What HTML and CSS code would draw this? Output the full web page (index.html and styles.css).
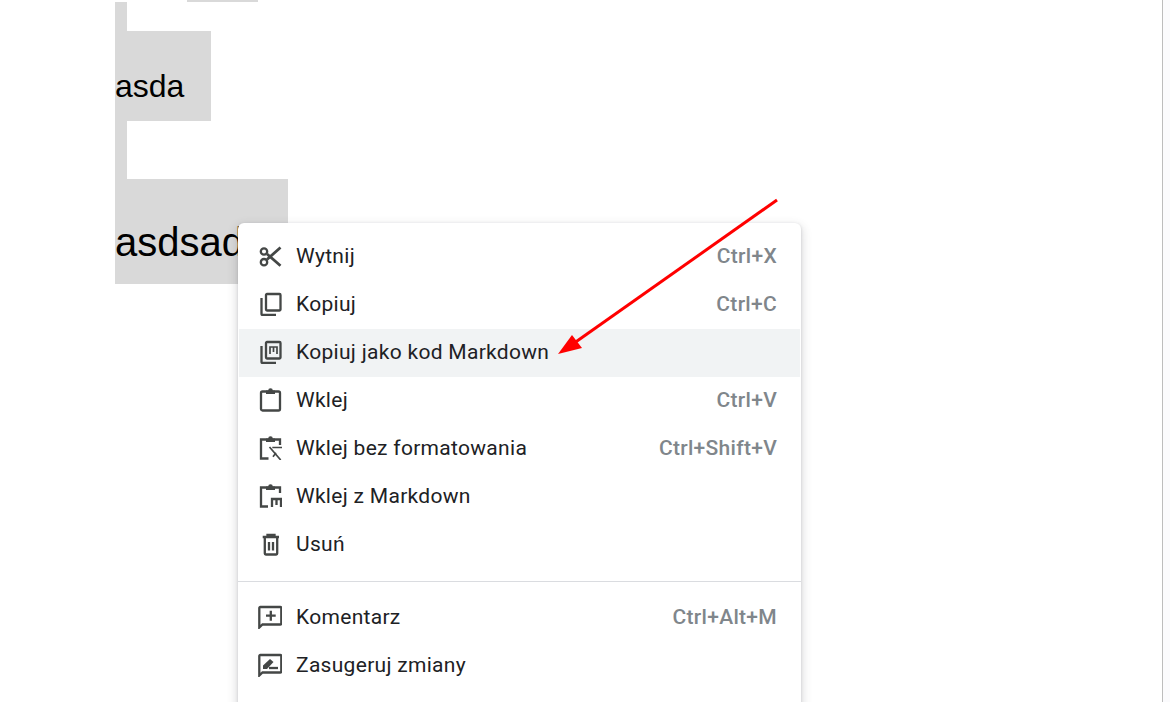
FILE: index.html
```html
<!DOCTYPE html>
<html lang="pl">
<head>
<meta charset="utf-8">
<title>Menu kontekstowe</title>
<link rel="stylesheet" href="styles.css">
</head>
<body>
<div class="page">
  <main class="doc">
    <div class="sliver"></div>
    <div class="stub stub-top"></div>
    <div class="block block-small">asda</div>
    <div class="stub stub-mid"></div>
    <div class="block block-large">asdsad</div>
  </main>
  <aside class="gutter"></aside>
</div>

<div class="menu">
  <div class="item">
    <svg class="icon" viewBox="0 0 24 24"><circle cx="6" cy="7.500" r="3.200"/><circle cx="6" cy="18.200" r="3.200"/><path class="bold" d="M9 10 22.500 21.800M9 15.500 22.500 3.500"/></svg>
    <span class="label">Wytnij</span><span class="key">Ctrl+X</span>
  </div>
  <div class="item">
    <svg class="icon" viewBox="0 0 24 24"><rect x="8" y="2" width="14.500" height="16.500" rx="1"/><path d="M3.500 6v16a1 1 0 0 0 1 1H18"/></svg>
    <span class="label">Kopiuj</span><span class="key">Ctrl+C</span>
  </div>
  <div class="item item-active">
    <svg class="icon" viewBox="0 0 24 24"><rect x="8" y="2" width="14.500" height="16.500" rx="1"/><path d="M3.500 6v16a1 1 0 0 0 1 1H18"/><path class="thin" d="M12 14V7h7v7M15.500 7v5"/></svg>
    <span class="label">Kopiuj jako kod Markdown</span>
  </div>
  <div class="item">
    <svg class="icon" viewBox="0 0 24 24"><rect x="3" y="3.500" width="19" height="19" rx="1.500"/><path class="solid" d="M8 2.500h2.200a2.300 2.300 0 0 1 4.600 0H17V6H8z"/></svg>
    <span class="label">Wklej</span><span class="key">Ctrl+V</span>
  </div>
  <div class="item">
    <svg class="icon" viewBox="0 0 24 24"><path d="M10.500 22.500H3V3.500h19V9"/><path class="solid" d="M8 2.500h2.200a2.300 2.300 0 0 1 4.600 0H17V6H8z"/><path class="thin" d="M14.300 11.500h10.400M11.500 11 22.700 24M15 20.700l3-4"/></svg>
    <span class="label">Wklej bez formatowania</span><span class="key">Ctrl+Shift+V</span>
  </div>
  <div class="item">
    <svg class="icon" viewBox="0 0 24 24"><path d="M10 22.500H3V3.500h19V9"/><path class="solid" d="M8 2.500h2.200a2.300 2.300 0 0 1 4.600 0H17V6H8z"/><path d="M14 23v-8h9v8M18.500 15v6"/></svg>
    <span class="label">Wklej z Markdown</span>
  </div>
  <div class="item">
    <svg class="icon" viewBox="0 0 24 24"><path d="M4.700 5h16.300M6.800 5v16.500a1 1 0 0 0 1 1h10.400a1 1 0 0 0 1-1V5M9.500 4.500V3h7v1.500"/><path d="M11 10v8.500M15 10v8.500"/></svg>
    <span class="label">Usuń</span>
  </div>
  <div class="divider"></div>
  <div class="item">
    <svg class="icon" viewBox="0 0 24 24"><path d="M1.300 22.500V3a1 1 0 0 1 1-1h20a1 1 0 0 1 1 1v15.500a1 1 0 0 1-1 1H4.500z"/><path d="M12.800 5.700v10M8 10.700h9.700"/></svg>
    <span class="label">Komentarz</span><span class="key">Ctrl+Alt+M</span>
  </div>
  <div class="item">
    <svg class="icon" viewBox="0 0 24 24"><path d="M1.300 22.500V3a1 1 0 0 1 1-1h20a1 1 0 0 1 1 1v15.500a1 1 0 0 1-1 1H4.500z"/><path class="solid" d="M5 16v-3.500L12 6l3.500 3L9 16z"/><path d="M11 15h9"/></svg>
    <span class="label">Zasugeruj zmiany</span>
  </div>
</div>

<svg class="arrow" viewBox="0 0 1170 702"><path class="arrow-line" d="M777 200 570 346"/><path class="arrow-head" d="M558 354 572 335 582 348z"/></svg>
</body>
</html>
```

FILE: styles.css
```css
html, body {
  margin: 0;
  height: 100%;
  overflow: hidden;
  background: #fff;
}

.page {
  display: flex;
  height: 702px;
}

.doc {
  flex: 1;
  padding-left: 115px;
  font-family: "Liberation Sans", Arial, sans-serif;
  color: #000;
}

.gutter {
  width: 7px;
  border-left: 1px solid #bdbdbd;
  background: #fbfbfd;
}

.sliver {
  width: 70.5px;
  height: 1.7px;
  margin-left: 72px;
  background: #d9d9d9;
}

.stub {
  width: 12px;
  background: #d9d9d9;
}

.stub-top { height: 29px; }
.stub-mid { height: 58.7px; }

.block {
  background: #d9d9d9;
}

.block-small {
  width: 95.5px;
  padding: 37px 0 16px;
  font-size: 32px;
  line-height: 37px;
}

.block-large {
  width: 173px;
  padding: 40px 0 19px;
  font-size: 40px;
  line-height: 46px;
}

.menu {
  position: absolute;
  left: 238px;
  top: 223px;
  width: 563px;
  padding: 9px 0 40px;
  background: #fff;
  border-radius: 6px;
  box-shadow: 0 1px 3px rgba(60, 64, 67, .22), 0 4px 8px 3px rgba(60, 64, 67, .13);
  font-family: Roboto, sans-serif;
  font-size: 21px;
  letter-spacing: .3px;
  color: #202124;
}

.item {
  display: flex;
  align-items: center;
  height: 48px;
  box-sizing: border-box;
  padding: 0 24px 0 20px;
}

.item-active {
  background: #f1f3f4;
  margin: 1px 1px -1px;
  padding: 0 23px 2px 19px;
}

.icon {
  flex: none;
  width: 24px;
  height: 24px;
  margin-right: 14px;
  fill: none;
  stroke: #444746;
  stroke-width: 2.3;
}

.icon .thin { stroke-width: 1.7; }
.icon .bold { stroke-width: 2.8; }
.icon .solid { fill: #444746; stroke: none; }

.label { flex: 1; }

.key {
  color: #80868b;
  font-weight: 500;
}

.divider {
  height: 1px;
  margin: 13px 0 11px;
  background: #dadce0;
}

.arrow {
  position: absolute;
  left: 0;
  top: 0;
  width: 1170px;
  height: 702px;
  pointer-events: none;
}

.arrow-line { stroke: #f00; stroke-width: 3; fill: none; }
.arrow-head { fill: #f00; }
```
